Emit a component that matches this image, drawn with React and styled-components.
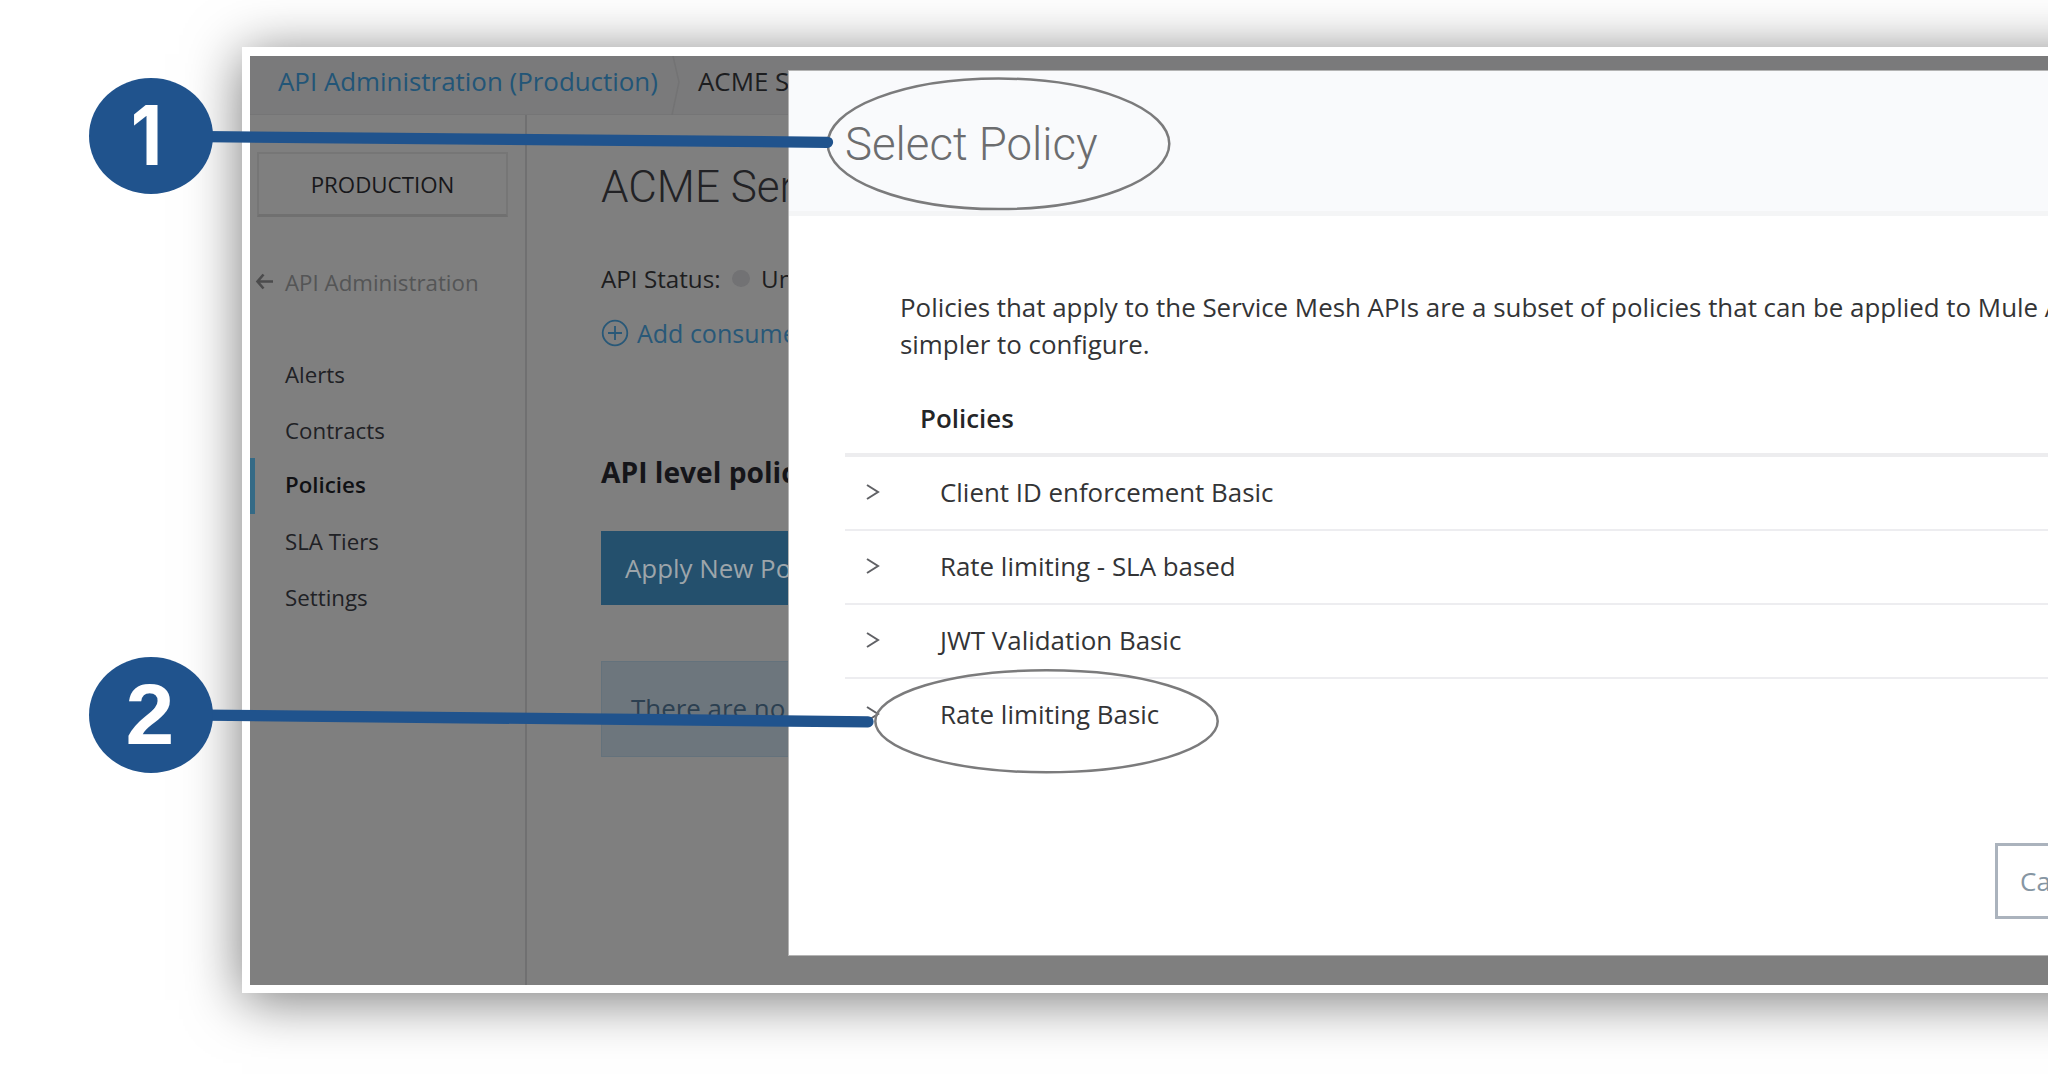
import React from 'react';
import styled, { createGlobalStyle } from 'styled-components';

const GlobalStyle = createGlobalStyle`
  * { box-sizing: border-box; }
  html, body { margin: 0; background: #fff; overflow: hidden; }
  body { font-family: "Open Sans", "Noto Sans", sans-serif; color: #333; }
`;

const Page = styled.main`
  position: relative;
  width: 2048px;
  height: 1074px;
  padding: 47px 0 0 242px;
  overflow: hidden;
  background: #fff;
`;

const Frame = styled.section`
  position: relative;
  width: 1960px;
  height: 946px;
  border: 8px solid #fff;
  border-top-width: 9px;
  box-shadow: 0 7px 52px rgba(0, 0, 0, 0.53);
  background: #7f7f7f;
  display: flex;
  flex-direction: column;
`;

const Text = styled.span`
  display: inline-block;
  white-space: nowrap;
`;

const Breadcrumb = styled.header`
  display: flex;
  flex: none;
  height: 59px;
  padding-left: 28px;
  background: #7a7a7b;
  border-bottom: 1px solid #757576;
  font-size: 25.9px;
  line-height: 50px;
`;

const CrumbLink = styled.a`
  width: 393px;
  color: #225577;
`;

const CrumbDivider = styled.svg`
  width: 12px;
  height: 59px;
  flex: none;
`;

const Crumb = styled.span`
  margin-left: 15px;
  color: #1c1d1f;
`;

const Columns = styled.div`
  display: flex;
  flex: 1;
  min-height: 0;
`;

const Sidebar = styled.aside`
  width: 277px;
  flex: none;
  border-right: 2px solid #707071;
  font-size: 22.3px;
`;

const Environment = styled.button`
  display: flex;
  align-items: center;
  justify-content: center;
  width: 251px;
  height: 65px;
  margin: 37px 0 0 7px;
  padding: 0;
  border: 2px solid #767676;
  border-bottom: 3px solid #707070;
  background: #7f7f7f;
  color: #17171a;
  font: 22.3px "Open Sans", sans-serif;
`;

const BackLink = styled.a`
  display: flex;
  align-items: center;
  height: 40px;
  margin-top: 45px;
  padding-left: 5px;
  gap: 11px;
  color: #545556;
`;

const Nav = styled.nav`
  margin-top: 45px;
`;

const NavItem = styled.a`
  display: flex;
  align-items: center;
  height: 55.7px;
  padding: 0 0 ${(p) => (p.$active ? 4 : 0)}px ${(p) => (p.$active ? 30 : 35)}px;
  border-left: ${(p) => (p.$active ? '5px solid #346a86' : '0')};
  color: ${(p) => (p.$active ? '#101114' : '#202125')};
  font-weight: ${(p) => (p.$active ? 600 : 400)};
`;

const Content = styled.div`
  flex: 1;
  padding: 41px 0 0 74px;
  font-size: 25px;
  color: #1d1d20;
`;

const ApiTitle = styled.h1`
  margin: 0;
  height: 70px;
  font: 300 44px/62px Roboto, sans-serif;
  color: #222225;
`;

const StatusRow = styled.div`
  display: flex;
  align-items: center;
  height: 34px;
  margin-top: 35px;
  font-size: 24.2px;
`;

const StatusLabel = styled.span`
  width: 131px;
`;

const StatusDot = styled.i`
  width: 18px;
  height: 17px;
  margin-right: 11px;
  border-radius: 50%;
  background: #727274;
`;

const AddLink = styled.a`
  display: flex;
  align-items: center;
  gap: 8px;
  height: 34px;
  margin-top: 21px;
  color: #285878;
`;

const SectionTitle = styled.h2`
  margin: 102px 0 0;
  font-size: 28.2px;
  line-height: 40px;
  font-weight: 700;
  color: #151519;
`;

const ApplyButton = styled.button`
  display: flex;
  align-items: center;
  width: 330px;
  height: 74px;
  margin-top: 39px;
  padding: 0 0 1px 24px;
  border: 0;
  background: #24506d;
  color: #9da5aa;
  font: 25.9px "Open Sans", sans-serif;
`;

const Notice = styled.p`
  width: 1300px;
  height: 96px;
  margin: 56px 0 0;
  padding-left: 29px;
  border: 1px solid #64727c;
  background: #6d767d;
  color: #2c4051;
  font-size: 25.9px;
  line-height: 92px;
`;

const Modal = styled.section`
  position: absolute;
  left: 539px;
  top: 15px;
  width: 1500px;
  height: 884px;
  background: #fff;
  box-shadow: 0 0 0 1px #b4b4b4;
  color: #333436;
  font-size: 25.9px;
`;

const ModalHeader = styled.header`
  height: 145px;
  padding-left: 56px;
  border-bottom: 5px solid #f4f5f6;
  background: #f9fafc;
`;

const ModalTitle = styled.h2`
  margin: 0;
  padding-top: 44px;
  font: 300 45.6px/60px Roboto, sans-serif;
  color: #6c6d6f;
`;

const Intro = styled.p`
  margin: 73px 0 0 111px;
  line-height: 37px;
`;

const PolicyTable = styled.div`
  margin: 47px 0 0 56px;
`;

const TableHead = styled.div`
  height: 46.5px;
  padding-left: 75px;
  border-bottom: 4px solid #ededef;
  line-height: 16px;
  font-weight: 600;
  color: #242527;
`;

const PolicyRow = styled.div`
  display: flex;
  align-items: center;
  height: 74.2px;
  padding: 0 0 ${(p) => (p.$last ? 4 : 1)}px 21px;
  gap: 60px;
  border-bottom: ${(p) => (p.$last ? '0' : '2px solid #ededf0')};
`;

const ModalFooter = styled.footer`
  margin: 90px 0 0 1206px;
`;

const CancelButton = styled.button`
  display: block;
  width: 150px;
  height: 76px;
  padding: 0 0 1px 22px;
  border: 3px solid #abb3bd;
  background: #fff;
  color: #8696a3;
  text-align: left;
  font: 26px "Open Sans", sans-serif;
`;

const Callouts = styled.svg`
  position: absolute;
  left: 0;
  top: 0;
  width: 2048px;
  height: 1074px;
`;

const Badge = styled.div`
  position: absolute;
  left: 88.5px;
  top: ${(p) => p.$top}px;
  width: 124px;
  height: 116px;
  display: flex;
  align-items: center;
  justify-content: center;
  border-radius: 50%;
  background: #20538d;
  color: #fff;
  font: 700 ${(p) => p.$size}px/116px ${(p) => p.$family}, sans-serif;
`;

const Digit = styled.span`
  transform: translate(${(p) => p.$shift}px, -1px) scaleX(${(p) => p.$scale});
`;

const POLICIES = [
  { name: 'Client ID enforcement Basic' },
  { name: 'Rate limiting - SLA based' },
  { name: 'JWT Validation Basic' },
  { name: 'Rate limiting Basic' },
];

const NAV = ['Alerts', 'Contracts', 'Policies', 'SLA Tiers', 'Settings'];

const ArrowLeft = () => (
  <svg width="19" height="18" viewBox="0 0 19 18" fill="none" stroke="#4b4b4c" strokeWidth="2.6">
    <path d="M8.5 1.5 2.5 8.5 8.5 15.5M2.5 8.5H18" />
  </svg>
);

const PlusCircle = () => (
  <svg width="28" height="28" viewBox="0 0 28 28" fill="none" stroke="#285878" strokeWidth="1.8">
    <circle cx="14" cy="14" r="12.3" />
    <path d="M14 7V21M7 14H21" />
  </svg>
);

const Chevron = () => (
  <svg width="14" height="18" viewBox="0 0 14 18" fill="none" stroke="#606165" strokeWidth="2">
    <path d="M1 2 12 9 1 16" />
  </svg>
);

export default function App() {
  return (
    <Page>
      <GlobalStyle />
      <Frame>
        <Breadcrumb>
          <CrumbLink><Text>API Administration (Production)</Text></CrumbLink>
          <CrumbDivider viewBox="0 0 12 59" fill="none" stroke="#737374" strokeWidth="1.5">
            <path d="M2 0 8 26 1 59" />
          </CrumbDivider>
          <Crumb><Text>ACME Service</Text></Crumb>
        </Breadcrumb>
        <Columns>
          <Sidebar>
            <Environment>PRODUCTION</Environment>
            <BackLink><ArrowLeft /><Text>API Administration</Text></BackLink>
            <Nav>
              {NAV.map((item) => (
                <NavItem key={item} $active={item === 'Policies'}><Text>{item}</Text></NavItem>
              ))}
            </Nav>
          </Sidebar>
          <Content>
            <ApiTitle><Text>ACME Service</Text></ApiTitle>
            <StatusRow>
              <StatusLabel><Text>API Status:</Text></StatusLabel>
              <StatusDot />
              <Text>Unregistered</Text>
            </StatusRow>
            <AddLink><PlusCircle /><Text>Add consumer endpoint</Text></AddLink>
            <SectionTitle><Text>API level policies</Text></SectionTitle>
            <ApplyButton><Text>Apply New Policy</Text></ApplyButton>
            <Notice><Text>There are no applied policies.</Text></Notice>
          </Content>
        </Columns>
        <Modal>
          <ModalHeader><ModalTitle><Text>Select Policy</Text></ModalTitle></ModalHeader>
          <Intro>
            <Text>Policies that apply to the Service Mesh APIs are a subset of policies that can be applied to Mule APIs</Text>
            <br />
            <Text>simpler to configure.</Text>
          </Intro>
          <PolicyTable>
            <TableHead><Text>Policies</Text></TableHead>
            {POLICIES.map((policy, i) => (
              <PolicyRow key={policy.name} $last={i === POLICIES.length - 1}>
                <Chevron />
                <Text>{policy.name}</Text>
              </PolicyRow>
            ))}
          </PolicyTable>
          <ModalFooter><CancelButton>Cancel</CancelButton></ModalFooter>
        </Modal>
      </Frame>
      <Callouts viewBox="0 0 2048 1074" fill="none">
        <ellipse cx="998.5" cy="143.8" rx="170.8" ry="65.3" stroke="#7b7b7c" strokeWidth="2.5" />
        <ellipse cx="1046.5" cy="721.3" rx="171.2" ry="51" stroke="#7b7b7c" strokeWidth="2.5" />
        <path d="M205 136.6 827.5 142.3M205 715.2 868 721.8" stroke="#20538d" strokeWidth="11.3" strokeLinecap="round" />
      </Callouts>
      <Badge $top={78} $size={83} $family="Inter"><Digit $shift={-4.5} $scale={0.88}>1</Digit></Badge>
      <Badge $top={657} $size={86} $family='"Liberation Sans"'><Digit $shift={-1} $scale={1.02}>2</Digit></Badge>
    </Page>
  );
}
